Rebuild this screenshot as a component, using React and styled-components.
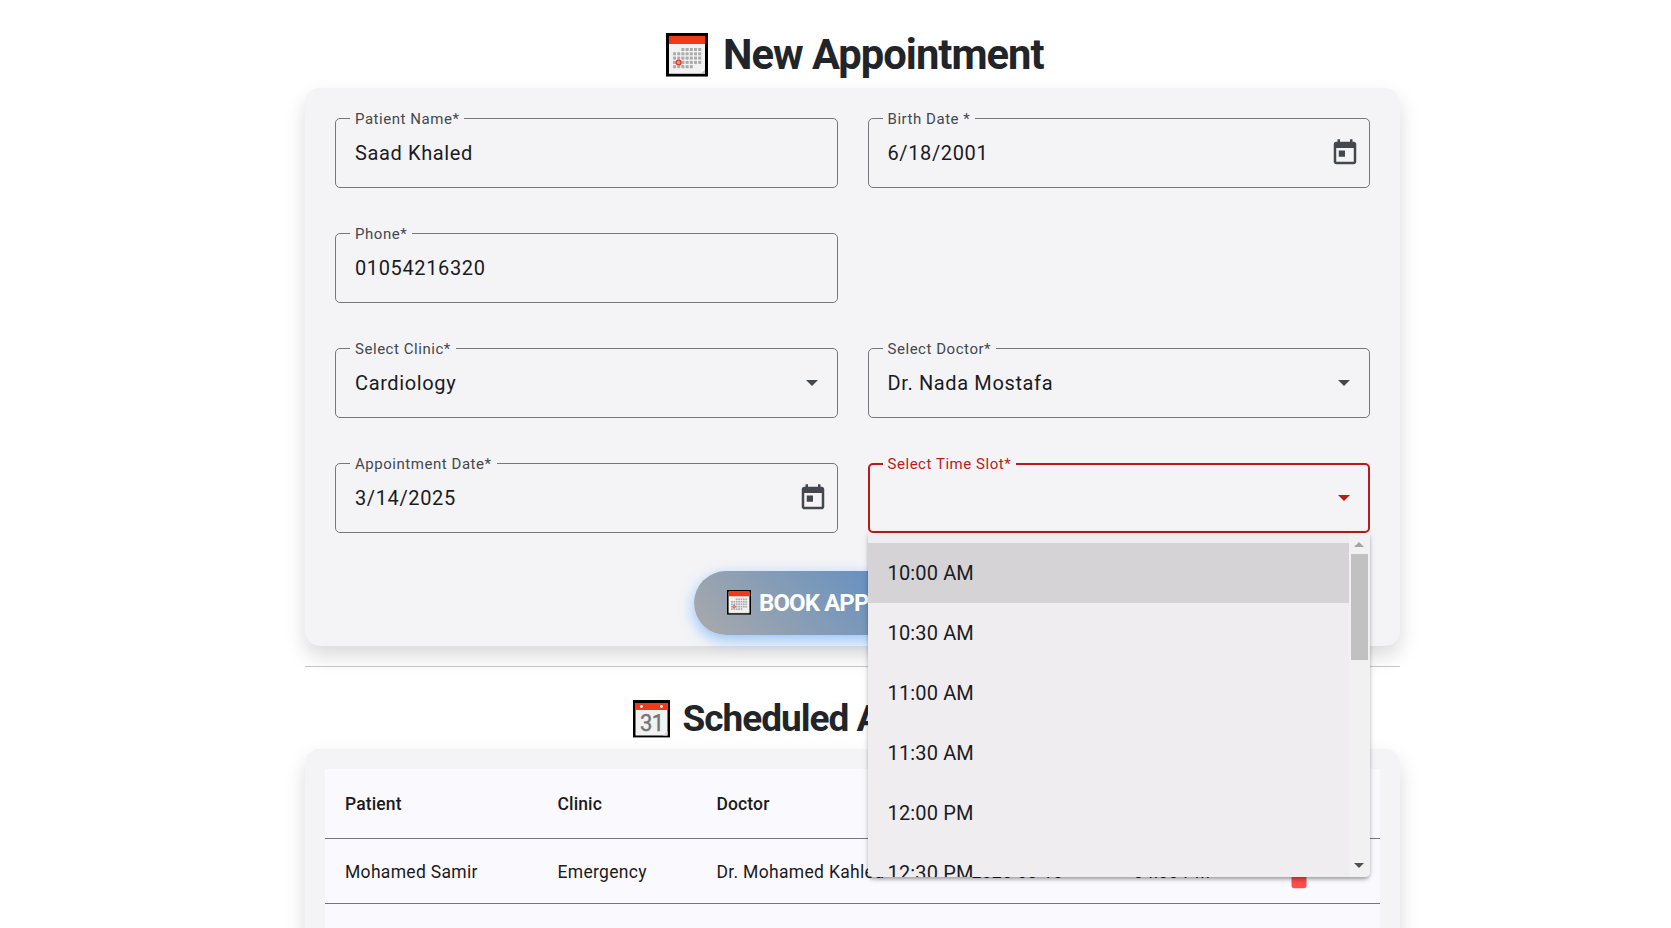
import React from "react";
import styled, { createGlobalStyle, css } from "styled-components";

const GlobalStyle = createGlobalStyle`
  *, *::before, *::after { box-sizing: border-box; }
  body {
    margin: 0;
    background: #fff;
    font-family: Roboto, "Liberation Sans", sans-serif;
    color: #1a1b1f;
  }
`;

const Page = styled.main`
  width: 1095px;
  height: 928px;
  margin-left: 305px;
  overflow: visible;
`;

const Viewport = styled.div`
  height: 928px;
  overflow: hidden;
`;

const Heading = styled.h1`
  display: flex;
  align-items: center;
  margin: 0;
  height: ${(p) => p.$height}px;
  padding: ${(p) => p.$padding};
  gap: ${(p) => p.$gap}px;
  font-size: ${(p) => p.$size}px;
  letter-spacing: ${(p) => p.$tracking}px;
  line-height: 50px;
  font-weight: 700;
  color: #212529;
  white-space: nowrap;
  svg { flex: none; display: block; }
`;

const Card = styled.section`
  background: #f4f4f7;
  border-radius: 15px;
  box-shadow: 0 10px 20px rgba(0, 0, 0, 0.15);
`;

const FormCard = styled(Card)`
  height: 558px;
  padding: 30px 30px 0;
  display: flex;
  flex-direction: column;
  align-items: center;
`;

const TableCard = styled(Card)`
  padding: 20px 20px 40px;
`;

const FieldGrid = styled.div`
  width: 100%;
  display: grid;
  grid-template-columns: 1fr 1fr;
  grid-auto-rows: 70px;
  gap: 45px 30px;
`;

const FieldBox = styled.div`
  position: relative;
  display: flex;
  align-items: center;
  justify-content: space-between;
  border: ${(p) => (p.$invalid ? "2px solid #ba1a1a" : "1px solid #74777f")};
  border-radius: 5px;
  padding: ${(p) => (p.$invalid ? "0 18px" : "0 19px")};
  color: ${(p) => (p.$invalid ? "#ba1a1a" : "#44474e")};
  ${(p) =>
    p.$ownRow &&
    css`
      grid-column: 1 / -1;
      width: calc(50% - 15px);
    `}
`;

const Label = styled.label`
  position: absolute;
  top: ${(p) => (p.$invalid ? -11 : -10)}px;
  left: ${(p) => (p.$invalid ? 13 : 14)}px;
  padding: 0 5px;
  background: #f4f4f7;
  font-size: 15px;
  line-height: 20px;
  letter-spacing: 0.54px;
  white-space: nowrap;
`;

const Value = styled.span`
  font-size: 20px;
  line-height: 30px;
  letter-spacing: 0.625px;
  color: #1a1b1f;
`;

const CalendarToggle = styled.svg`
  width: 30px;
  height: 30px;
  margin-right: -10px;
  fill: currentColor;
`;

const Caret = styled.span`
  border: 6.25px solid transparent;
  border-top-color: currentColor;
  border-bottom: 0;
`;

const Panel = styled.div`
  position: absolute;
  z-index: 5;
  top: 68px;
  left: -2px;
  width: 502px;
  height: 344px;
  display: flex;
  overflow: hidden;
  background: #efedf0;
  border-radius: 0 0 5px 5px;
`;

const PanelShadow = styled(Panel)`
  z-index: 4;
  overflow: visible;
  box-shadow: 0 4px 5px -2px rgba(0, 0, 0, 0.2), 0 2px 3px rgba(0, 0, 0, 0.14),
    0 1px 6px rgba(0, 0, 0, 0.12);
`;

const Options = styled.ul`
  flex: 1;
  margin: 0;
  padding: 10px 0;
  list-style: none;
`;

const Option = styled.li`
  height: 60px;
  padding: 0 20px;
  font-size: 20px;
  line-height: 60px;
  letter-spacing: 0.15px;
  color: #1a1b1f;
  background: ${(p) => (p.$active ? "#d5d3d6" : "transparent")};
`;

const Scrollbar = styled.div`
  width: 21px;
  background: #f1f1f1;
  display: flex;
  flex-direction: column;
  align-items: center;
`;

const ScrollArrow = styled.span`
  border: 5px solid transparent;
  ${(p) =>
    p.$up
      ? "border-top: 0; border-bottom-color: #a3a3a3; margin: 9px 0 7px;"
      : "border-bottom: 0; border-top-color: #505050; margin: auto 0 9px;"}
`;

const Thumb = styled.span`
  width: 17px;
  height: 106px;
  background: #c1c1c1;
`;

const BookButton = styled.button`
  width: 317px;
  height: 64px;
  margin-top: 38px;
  padding: 0 0 1px 33px;
  display: flex;
  align-items: center;
  gap: 8px;
  border: 0;
  border-radius: 32px;
  background: linear-gradient(45deg, #aaa, #4082cd);
  box-shadow: 0 5px 15px rgba(0, 123, 255, 0.4);
  color: #fff;
  font: 700 24px Roboto, sans-serif;
  letter-spacing: -0.9px;
  white-space: nowrap;
  svg { flex: none; }
`;

const Divider = styled.hr`
  height: 1px;
  margin: 20px 0 0;
  border: 0;
  background: #212529;
  opacity: 0.25;
`;

const Table = styled.div`
  background: #faf9fd;
`;

const Row = styled.div`
  display: grid;
  grid-template-columns: 212.5px 159px 255px 162px 149px 1fr;
  align-items: center;
  height: ${(p) => (p.$head ? 70 : 65)}px;
  padding-top: ${(p) => (p.$head ? 0 : 2)}px;
  border-bottom: 1px solid #74777f;
  font-size: 17.5px;
  font-weight: ${(p) => (p.$head ? 500 : 400)};
  letter-spacing: ${(p) => (p.$head ? 0.12 : 0.32)}px;
`;

const Cell = styled.div`
  padding-left: 20px;
  white-space: nowrap;
`;

const DeleteIcon = styled.svg`
  display: block;
  width: 30px;
  height: 30px;
  margin: 9px 0 0 1px;
  fill: #ff4c4c;
`;

const DOTS = [
  [2, 3, 4, 5, 6],
  [0, 1, 2, 3, 4, 5, 6],
  [0, 1, 2, 3, 4, 5, 6],
  [0, 1, 2, 3, 4, 5, 6],
  [0, 1, 2, 3, 4],
];

const MonthIcon = ({ width, height }) => (
  <svg width={width} height={height} viewBox="0 0 42 44" preserveAspectRatio="none">
    <rect width="42" height="44" fill="#000" />
    <rect y="43" width="42" height="1" fill="#777" />
    <rect x="3" y="3" width="36" height="38" fill="#bbb" />
    <rect x="3" y="3" width="36" height="37" fill="#f2f2f2" />
    <rect x="3" y="3" width="36" height="8" fill="#f03a17" />
    {DOTS.map((cols, r) =>
      cols.map((c) => (
        <rect key={`${r}-${c}`} x={7 + c * 4.2} y={15 + r * 4.3} width="3" height="3" fill="#ababab" />
      ))
    )}
    <circle cx="12.6" cy="29.4" r="2.3" fill="none" stroke="#f03a17" strokeWidth="1.4" />
    <path d="M39 36v4h-4z" fill="#ccc" />
    <path d="M35 40v-4h4z" fill="#fff" />
  </svg>
);

const DayMark = styled.svg`
  margin-bottom: 1px;
`;

const DayIcon = () => (
  <DayMark width="37" height="38" viewBox="0 0 37 38">
    <rect width="37" height="38" fill="#000" />
    <rect y="37" width="37" height="1" fill="#999" />
    <rect x="2.5" y="3" width="32" height="32.5" fill="#f2f2f2" />
    <rect x="2.5" y="3" width="32" height="7" fill="#f03a17" />
    <circle cx="8.5" cy="6.5" r="1.4" fill="#fff" />
    <circle cx="28.5" cy="6.5" r="1.4" fill="#fff" />
    <text
      transform="translate(18.8 31) scale(0.9 1)"
      textAnchor="middle"
      fontFamily="Roboto, sans-serif"
      fontSize="24.5"
      fontWeight="400"
      letterSpacing="-0.6"
      fill="#767676"
      stroke="#767676"
      strokeWidth="0.4"
    >
      31
    </text>
    <path d="M34.5 31v4.5h-4.5z" fill="#ddd" />
  </DayMark>
);

const TodayIcon = () => (
  <CalendarToggle viewBox="0 0 24 24">
    <path d="M19 3h-1V1h-2v2H8V1H6v2H5c-1.11 0-1.99.9-1.99 2L3 19c0 1.1.89 2 2 2h14c1.1 0 2-.9 2-2V5c0-1.1-.9-2-2-2zm0 16H5V8h14v11zM7 10h5v5H7z" />
  </CalendarToggle>
);

const Field = ({ label, value, kind, invalid, ownRow, children }) => (
  <FieldBox $invalid={invalid} $ownRow={ownRow}>
    <Label $invalid={invalid}>{label}</Label>
    <Value>{value}</Value>
    {kind === "date" && <TodayIcon />}
    {kind === "select" && <Caret />}
    {children}
  </FieldBox>
);

const SLOTS = ["10:00 AM", "10:30 AM", "11:00 AM", "11:30 AM", "12:00 PM", "12:30 PM"];

const TimePanel = () => (
  <>
    <PanelShadow />
    <Panel>
      <Options>
        {SLOTS.map((slot, i) => (
          <Option key={slot} $active={i === 0}>
            {slot}
          </Option>
        ))}
      </Options>
      <Scrollbar>
        <ScrollArrow $up />
        <Thumb />
        <ScrollArrow />
      </Scrollbar>
    </Panel>
  </>
);

export default function App() {
  return (
    <Viewport>
      <GlobalStyle />
      <Page>
        <Heading $height={88} $size={41.7} $tracking={-0.98} $gap={15} $padding="22px 0 0 361px">
          <MonthIcon width={42} height={44} />
          New Appointment
        </Heading>
        <FormCard>
          <FieldGrid>
            <Field label="Patient Name*" value="Saad Khaled" />
            <Field label="Birth Date *" value="6/18/2001" kind="date" />
            <Field label="Phone*" value="01054216320" ownRow />
            <Field label="Select Clinic*" value="Cardiology" kind="select" />
            <Field label="Select Doctor*" value="Dr. Nada Mostafa" kind="select" />
            <Field label="Appointment Date*" value="3/14/2025" kind="date" />
            <Field label="Select Time Slot*" value="" kind="select" invalid>
              <TimePanel />
            </Field>
          </FieldGrid>
          <BookButton type="button">
            <MonthIcon width={24} height={25} />
            BOOK APPOINTMENT
          </BookButton>
        </FormCard>
        <Divider />
        <Heading as="h2" $height={82} $size={37} $tracking={-1} $gap={12.5} $padding="22px 0 0 328px">
          <DayIcon />
          Scheduled Appointments
        </Heading>
        <TableCard>
          <Table>
            <Row $head>
              <Cell>Patient</Cell>
              <Cell>Clinic</Cell>
              <Cell>Doctor</Cell>
              <Cell>Date</Cell>
              <Cell>Time</Cell>
              <Cell>Action</Cell>
            </Row>
            <Row>
              <Cell>Mohamed Samir</Cell>
              <Cell>Emergency</Cell>
              <Cell>Dr. Mohamed Kahled</Cell>
              <Cell>2025-03-10</Cell>
              <Cell>04:00 PM</Cell>
              <Cell>
                <DeleteIcon viewBox="0 0 24 24">
                  <path d="M6 19c0 1.1.9 2 2 2h8c1.1 0 2-.9 2-2V7H6v12zM19 4h-3.5l-1-1h-5l-1 1H5v2h14V4z" />
                </DeleteIcon>
              </Cell>
            </Row>
            <Row />
          </Table>
        </TableCard>
      </Page>
    </Viewport>
  );
}
